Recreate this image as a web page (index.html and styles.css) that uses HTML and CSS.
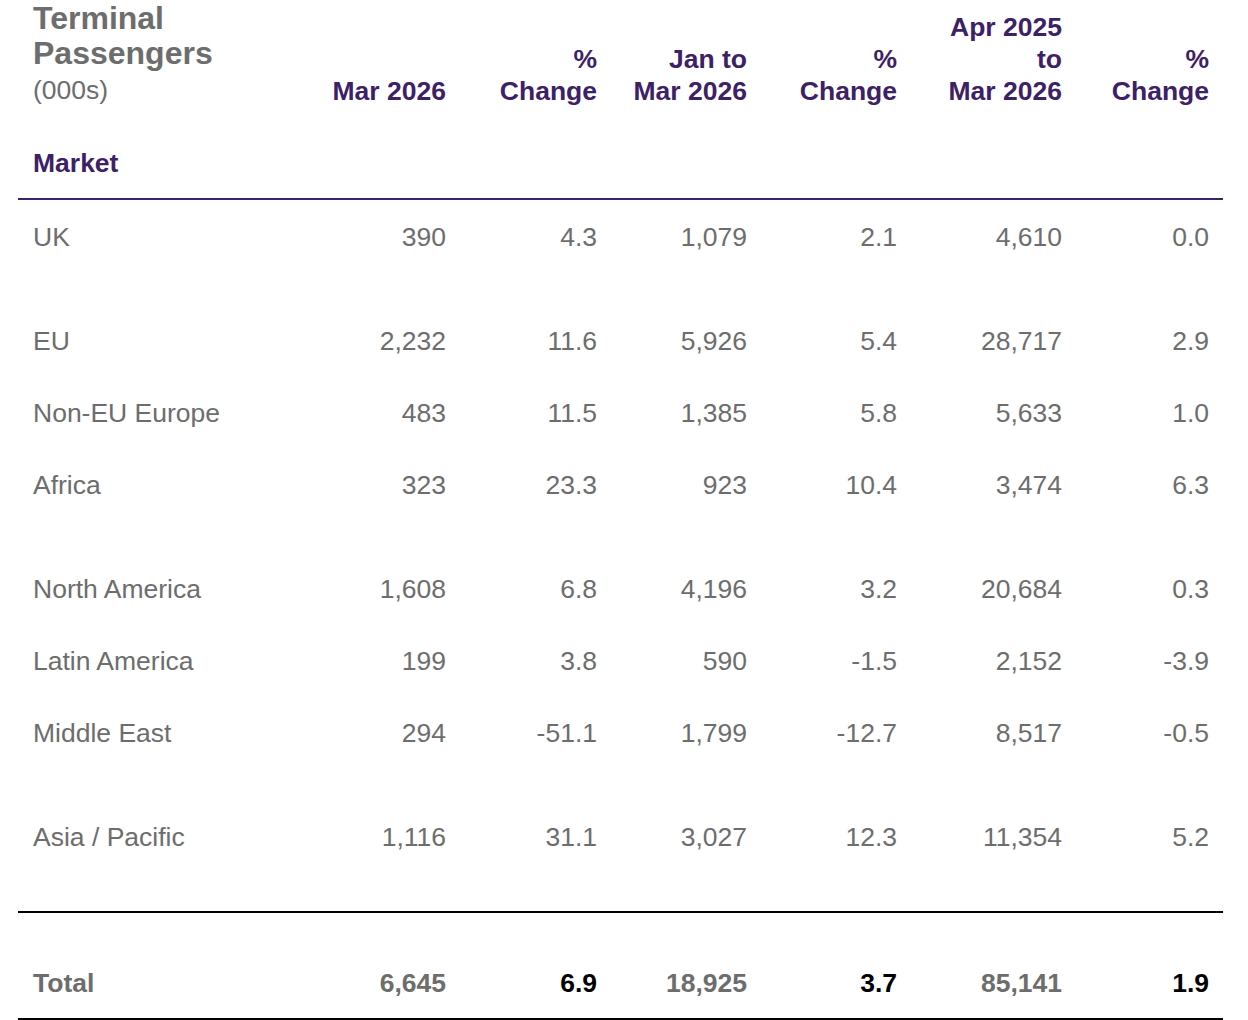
FILE: index.html
```html
<!DOCTYPE html>
<html lang="en">
<head>
<meta charset="utf-8">
<title>Terminal Passengers</title>
<link rel="stylesheet" href="styles.css">
</head>
<body>
<table class="stats">
  <colgroup>
    <col class="c-market">
    <col class="c-a">
    <col class="c-b">
    <col class="c-a">
    <col class="c-a">
    <col class="c-c">
    <col class="c-d">
  </colgroup>
  <thead>
    <tr class="head-row">
      <th class="title-cell">
        <div class="title">Terminal<br>Passengers</div>
        <div class="unit">(000s)</div>
      </th>
      <th class="col-head">Mar 2026</th>
      <th class="col-head">%<br>Change</th>
      <th class="col-head">Jan to<br>Mar 2026</th>
      <th class="col-head">%<br>Change</th>
      <th class="col-head">Apr 2025<br>to<br>Mar 2026</th>
      <th class="col-head">%<br>Change</th>
    </tr>
    <tr class="market-row">
      <th class="market">Market</th>
      <th></th><th></th><th></th><th></th><th></th><th></th>
    </tr>
  </thead>
  <tbody>
    <tr class="row gap">
      <td>UK</td><td>390</td><td>4.3</td><td>1,079</td><td>2.1</td><td>4,610</td><td>0.0</td>
    </tr>
    <tr class="row">
      <td>EU</td><td>2,232</td><td>11.6</td><td>5,926</td><td>5.4</td><td>28,717</td><td>2.9</td>
    </tr>
    <tr class="row">
      <td>Non-EU Europe</td><td>483</td><td>11.5</td><td>1,385</td><td>5.8</td><td>5,633</td><td>1.0</td>
    </tr>
    <tr class="row gap">
      <td>Africa</td><td>323</td><td>23.3</td><td>923</td><td>10.4</td><td>3,474</td><td>6.3</td>
    </tr>
    <tr class="row">
      <td>North America</td><td>1,608</td><td>6.8</td><td>4,196</td><td>3.2</td><td>20,684</td><td>0.3</td>
    </tr>
    <tr class="row">
      <td>Latin America</td><td>199</td><td>3.8</td><td>590</td><td>-1.5</td><td>2,152</td><td>-3.9</td>
    </tr>
    <tr class="row gap">
      <td>Middle East</td><td>294</td><td>-51.1</td><td>1,799</td><td>-12.7</td><td>8,517</td><td>-0.5</td>
    </tr>
    <tr class="row last">
      <td>Asia / Pacific</td><td>1,116</td><td>31.1</td><td>3,027</td><td>12.3</td><td>11,354</td><td>5.2</td>
    </tr>
  </tbody>
  <tfoot>
    <tr class="total-row">
      <td>Total</td><td>6,645</td><td class="pct">6.9</td><td>18,925</td><td class="pct">3.7</td><td>85,141</td><td class="pct">1.9</td>
    </tr>
  </tfoot>
</table>
</body>
</html>
```
FILE: styles.css
```css
html, body {
  margin: 0;
  padding: 0;
  background: #ffffff;
}

body {
  font-family: "Liberation Sans", Arial, Helvetica, sans-serif;
  color: #6d6d6d;
  font-size: 26.5px;
}

.stats {
  margin-left: 18px;
  width: 1205px;
  table-layout: fixed;
  border-collapse: separate;
  border-spacing: 0;
}

.c-market { width: 292px; }
.c-a { width: 150px; }
.c-b { width: 151px; }
.c-c { width: 165px; }
.c-d { width: 147px; }

.stats th,
.stats td {
  padding: 0 14px 0 0;
  text-align: right;
  font-weight: normal;
}

.stats th:first-child,
.stats td:first-child {
  text-align: left;
  padding-left: 15px;
  padding-right: 0;
}

/* header row */
.head-row th {
  vertical-align: bottom;
  padding-bottom: 1px;
}

.head-row .title-cell {
  padding-top: 1px;
  padding-bottom: 0;
}

.title {
  font-size: 32px;
  line-height: 35px;
  font-weight: bold;
  color: #6d6d6d;
}

.unit {
  margin-top: 1px;
  font-size: 26.5px;
  line-height: 36px;
  color: #6d6d6d;
}

.col-head {
  font-size: 26.5px;
  line-height: 32px;
  font-weight: bold !important;
  color: #3d2166;
}

/* market row */
.market-row th {
  padding-top: 39px;
  padding-bottom: 19px;
  line-height: 32px;
  border-bottom: 2px solid #3d2166;
}

.market-row .market {
  font-weight: bold;
  color: #3d2166;
}

/* body rows */
.row td {
  vertical-align: top;
  line-height: 36px;
  padding-top: 19px;
  padding-bottom: 17px;
}

.row.gap td {
  padding-bottom: 49px;
}

.row.last td {
  padding-bottom: 56px;
}

/* total row */
.total-row td {
  vertical-align: top;
  line-height: 36px;
  padding-top: 52px;
  padding-bottom: 17px;
  border-top: 2px solid #000000;
  border-bottom: 2px solid #000000;
  font-weight: bold;
  color: #6d6d6d;
}

.total-row td.pct {
  color: #000000;
}
```
